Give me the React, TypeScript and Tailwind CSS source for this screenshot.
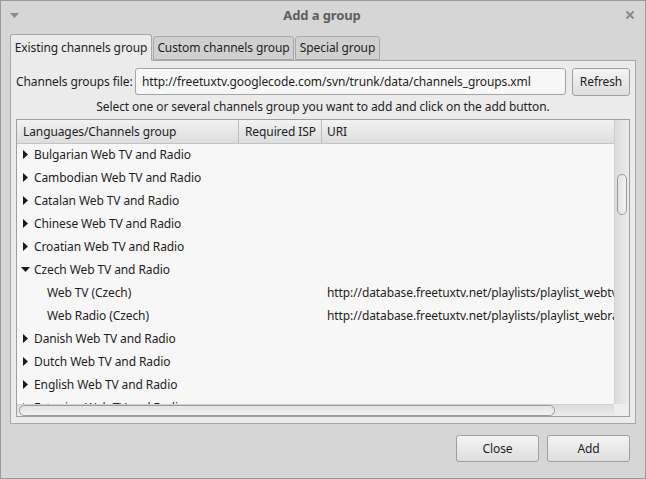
import React from "react";

const font = { fontFamily: '"Noto Sans", "Open Sans", sans-serif', letterSpacing: "-0.1px" };

function Tri({ open }: { open?: boolean }) {
  return open ? (
    <svg width="9" height="9" viewBox="0 0 9 9" className="shrink-0">
      <polygon points="0,2 9,2 4.5,7" fill="#1a1a1a" />
    </svg>
  ) : (
    <svg width="9" height="9" viewBox="0 0 9 9" className="shrink-0">
      <polygon points="2,0 7,4.5 2,9" fill="#1a1a1a" />
    </svg>
  );
}

type Row = { label: string; kind: "parent" | "open" | "child"; uri?: string };

const rows: Row[] = [
  { label: "Bulgarian Web TV and Radio", kind: "parent" },
  { label: "Cambodian Web TV and Radio", kind: "parent" },
  { label: "Catalan Web TV and Radio", kind: "parent" },
  { label: "Chinese Web TV and Radio", kind: "parent" },
  { label: "Croatian Web TV and Radio", kind: "parent" },
  { label: "Czech Web TV and Radio", kind: "open" },
  { label: "Web TV (Czech)", kind: "child", uri: "http://database.freetuxtv.net/playlists/playlist_webtv_cz.m3u" },
  { label: "Web Radio (Czech)", kind: "child", uri: "http://database.freetuxtv.net/playlists/playlist_webradio_cz.m3u" },
  { label: "Danish Web TV and Radio", kind: "parent" },
  { label: "Dutch Web TV and Radio", kind: "parent" },
  { label: "English Web TV and Radio", kind: "parent" },
  { label: "Estonian Web TV and Radio", kind: "parent" },
];

export default function App() {
  return (
    <div
      style={font}
      className="w-[646px] h-[479px] bg-[#d6d6d6] border border-[#9a9a9a] flex flex-col text-[12px] text-[#1e1e1e] overflow-hidden whitespace-nowrap"
    >
      {/* title bar */}
      <div className="h-[28px] shrink-0 flex items-center justify-between px-[9px]">
        <svg width="9" height="7" viewBox="0 0 9 7">
          <polygon points="0,1 9,1 4.5,6" fill="#8a8a8a" />
        </svg>
        <div className="font-bold text-[13px] text-[#5e5e5e] leading-none">Add a group</div>
        <svg width="10" height="10" viewBox="0 0 10 10" className="mr-[1px]">
          <path d="M1.5 1.5 L8.5 8.5 M8.5 1.5 L1.5 8.5" stroke="#8a8a8a" strokeWidth="2" />
        </svg>
      </div>

      <div className="px-[9px] flex flex-col">
        {/* tabs */}
        <div className="flex items-end h-[32px] -mb-px relative z-10">
          <div className="w-[142px] h-[27px] flex items-center justify-center bg-[#ebebeb] border border-[#a8a8a8] border-b-[#ebebeb] rounded-t-[3px]">
            Existing channels group
          </div>
          <div className="w-[141px] h-[24px] ml-[1px] flex items-center justify-center bg-[#d0d0d0] border border-[#a8a8a8] rounded-t-[3px] mb-px">
            Custom channels group
          </div>
          <div className="w-[85px] h-[24px] ml-[1px] flex items-center justify-center bg-[#d0d0d0] border border-[#a8a8a8] rounded-t-[3px] mb-px">
            Special group
          </div>
        </div>

        {/* panel */}
        <div className="h-[364px] bg-[#ebebeb] border border-[#a8a8a8] flex flex-col px-[5px] pt-[7px]">
          <div className="flex items-center h-[27px]">
            <div className="w-[119px] shrink-0">Channels groups file:</div>
            <div className="w-[431px] h-[27px] border border-[#a5a5a5] rounded-[3px] bg-[#f7f7f7] flex items-center px-[6px]">
              http://freetuxtv.googlecode.com/svn/trunk/data/channels_groups.xml
            </div>
            <div className="ml-[6px] w-[58px] h-[28px] border border-[#a0a0a0] rounded-[3px] bg-gradient-to-b from-[#f4f4f4] to-[#dedede] flex items-center justify-center">
              Refresh
            </div>
          </div>
          <div className="h-[24px] flex items-center justify-center">
            Select one or several channels group you want to add and click on the add button.
          </div>

          {/* tree */}
          <div className="h-[298px] border border-[#a0a0a0] bg-[#f7f7f7] flex flex-col">
            <div className="flex flex-1 min-h-0">
              <div className="flex-1 flex flex-col min-w-0 overflow-hidden">
                <div className="h-[24px] shrink-0 flex bg-gradient-to-b from-[#f2f2f2] to-[#dddddd] border-b border-[#c4c4c4]">
                  <div className="w-[222px] shrink-0 px-[6px] flex items-center border-r border-[#bdbdbd]">
                    Languages/Channels group
                  </div>
                  <div className="w-[83px] shrink-0 px-[6px] flex items-center border-r border-[#bdbdbd]">
                    Required ISP
                  </div>
                  <div className="flex-1 px-[5px] flex items-center">URI</div>
                </div>
                <div className="flex-1 overflow-hidden">
                  <div className="-mt-px">
                    {rows.map((r) => (
                      <div key={r.label} className="h-[23px] flex items-center">
                        <div className="w-[305px] shrink-0 flex items-center">
                          {r.kind === "child" ? (
                            <span className="pl-[30px]">{r.label}</span>
                          ) : (
                            <>
                              <span className="pl-[4px] w-[17px] flex">
                                <Tri open={r.kind === "open"} />
                              </span>
                              <span>{r.label}</span>
                            </>
                          )}
                        </div>
                        {r.uri && <span className="pl-[5px]">{r.uri}</span>}
                      </div>
                    ))}
                  </div>
                </div>
              </div>
              {/* vertical scrollbar */}
              <div className="w-[15px] shrink-0 bg-gradient-to-r from-[#dcdcdc] to-[#ececec] border-l border-[#d0d0d0] pt-[54px] flex justify-center">
                <div className="w-[10px] h-[41px] rounded-[5px] border border-[#9a9a9a] bg-gradient-to-r from-[#e2e2e2] to-[#f2f2f2]" />
              </div>
            </div>
            {/* horizontal scrollbar */}
            <div className="h-[12px] shrink-0 flex">
              <div className="flex-1 bg-gradient-to-b from-[#dcdcdc] to-[#ececec] border-t border-[#d0d0d0] pl-[2px] flex items-center">
                <div className="w-[536px] h-[11px] rounded-[6px] border border-[#9a9a9a] bg-gradient-to-b from-[#e4e4e4] to-[#f2f2f2]" />
              </div>
              <div className="w-[15px] bg-[#eeeeee]" />
            </div>
          </div>
        </div>
      </div>

      {/* buttons */}
      <div className="flex justify-end gap-[8px] pr-[15px] pt-[11px]">
        <div className="w-[83px] h-[27px] border border-[#a0a0a0] rounded-[3px] bg-gradient-to-b from-[#f4f4f4] to-[#dedede] flex items-center justify-center">
          Close
        </div>
        <div className="w-[83px] h-[27px] border border-[#a0a0a0] rounded-[3px] bg-gradient-to-b from-[#f4f4f4] to-[#dedede] flex items-center justify-center">
          Add
        </div>
      </div>
    </div>
  );
}
